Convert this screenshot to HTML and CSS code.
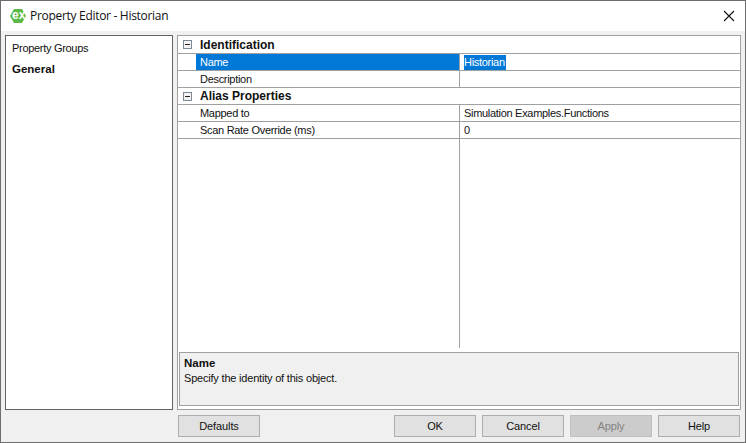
FILE: index.html
```html
<!DOCTYPE html>
<html lang="en">
<head>
<meta charset="utf-8">
<title>Property Editor - Historian</title>
<link rel="stylesheet" href="styles.css">
</head>
<body>
<div class="window">
  <header class="titlebar">
    <svg class="app-icon" width="16" height="14" viewBox="0 0 16 14"><path d="M4 0h8l4 7-4 7H4L0 7z" fill="#5cb947"/></svg>
    <span class="app-icon-text">ex</span>
    <span class="title">Property Editor - Historian</span>
    <svg class="close" width="12" height="12" viewBox="0 0 12 12"><path d="M1 1l10 10M11 1L1 11" stroke="#111" stroke-width="1.1" fill="none"/></svg>
  </header>
  <main class="content">
    <nav class="groups">
      <div class="groups-head">Property Groups</div>
      <div class="groups-item">General</div>
    </nav>
    <section class="editor">
      <div class="grid">
        <div class="row cat first"><span class="gutter"><span class="minus"></span></span><span class="cat-name">Identification</span></div>
        <div class="row selected"><span class="gutter"></span><span class="name">Name</span><span class="value"><span class="sel-text">Historian</span></span></div>
        <div class="row"><span class="gutter"></span><span class="name">Description</span><span class="value"></span></div>
        <div class="row cat"><span class="gutter"><span class="minus"></span></span><span class="cat-name">Alias Properties</span></div>
        <div class="row"><span class="gutter"></span><span class="name">Mapped to</span><span class="value">Simulation Examples.Functions</span></div>
        <div class="row"><span class="gutter"></span><span class="name">Scan Rate Override (ms)</span><span class="value">0</span></div>
        <div class="filler"><span class="filler-left"></span></div>
        <div class="help">
          <div class="help-title">Name</div>
          <div class="help-text">Specify the identity of this object.</div>
        </div>
      </div>
      <footer class="buttons">
        <button class="btn">Defaults</button>
        <span class="spacer"></span>
        <button class="btn">OK</button>
        <button class="btn">Cancel</button>
        <button class="btn disabled">Apply</button>
        <button class="btn">Help</button>
      </footer>
    </section>
  </main>
</div>
</body>
</html>
```
FILE: styles.css
```css
* { box-sizing: border-box; }
html, body { margin: 0; padding: 0; }
body { width: 746px; height: 443px; overflow: hidden; background: #fff; font: 11px/17px "Liberation Sans", Arial, sans-serif; letter-spacing: -0.3px; color: #111; }
.window { width: 746px; height: 443px; border: 1px solid #6d6d6d; background: #f0f0f0; display: flex; flex-direction: column; }
.titlebar { height: 30px; flex: none; background: #fff; display: flex; align-items: center; padding: 0 0 0 9px; position: relative; }
.app-icon { flex: none; }
.app-icon-text { position: absolute; left: 11px; top: 7px; color: #fff; font-size: 12px; font-weight: 700; line-height: 14px; letter-spacing: 0; }
.title { margin-left: 4px; font: 12px/16px "Open Sans", "Liberation Sans", sans-serif; letter-spacing: -0.3px; color: #111; }
.close { margin-left: auto; margin-right: 10px; }
.content { flex: 1; display: flex; padding: 4px 4px 5px 4px; gap: 4px; min-height: 0; }
.groups { width: 168px; flex: none; background: #fff; border: 1px solid #646464; height: 375px; padding: 4px 6px; }
.groups-head { height: 17px; }
.groups-item { margin-top: 4px; font-size: 11.5px; font-weight: 700; letter-spacing: 0; }
.editor { flex: 1; display: flex; flex-direction: column; min-width: 0; }
.grid { height: 375px; border: 1px solid #a0a0a0; background: #fff; display: flex; flex-direction: column; flex: none; width: 564px; }
.row { height: 17px; flex: none; display: flex; border-bottom: 1px solid #a0a0a0; line-height: 16px; }
.row.first { height: 18px; line-height: 18px; }
.gutter { width: 18px; flex: none; background: #fff; display: flex; align-items: center; justify-content: center; }
.minus { width: 9px; height: 9px; border: 1px solid #7f8a99; position: relative; background: #f4f4f4; }
.minus::after { content: ""; position: absolute; left: 1px; right: 1px; top: 3px; height: 1px; background: #222; }
.cat-name { font-weight: 700; padding-left: 4px; font-size: 12px; letter-spacing: 0; }
.name { width: 263px; flex: none; padding-left: 4px; }
.value { flex: 1; border-left: 1px solid #a0a0a0; padding-left: 4px; }
.selected .name { background: #0078d7; color: #fff; }
.sel-text { background: #0078d7; color: #fff; display: inline-block; height: 15px; line-height: 15px; padding: 0 1px 0 0; margin-top: 1px; vertical-align: top; }
.filler { height: 209px; flex: none; display: flex; }
.filler-left { width: 282px; flex: none; border-right: 1px solid #a0a0a0; }
.help { height: 54px; flex: none; margin: 4px 1px 1px 1px; background: #f0f0f0; border: 1px solid #a0a0a0; padding: 3px 4px; line-height: 15px; letter-spacing: -0.2px; }
.help-title { font-size: 11.5px; font-weight: 700; letter-spacing: 0; }
.buttons { display: flex; gap: 6px; margin-top: 5px; width: 563px; padding-left: 1px; height: 22px; flex: none; }
.spacer { flex: 1; }
.btn { width: 82px; height: 22px; padding: 0; border: 1px solid #adadad; background: #e1e1e1; font: 11px/20px "Liberation Sans", Arial, sans-serif; letter-spacing: -0.1px; color: #111; }
.btn.disabled { background: #cccccc; color: #838383; border-color: #bfbfbf; }
```
